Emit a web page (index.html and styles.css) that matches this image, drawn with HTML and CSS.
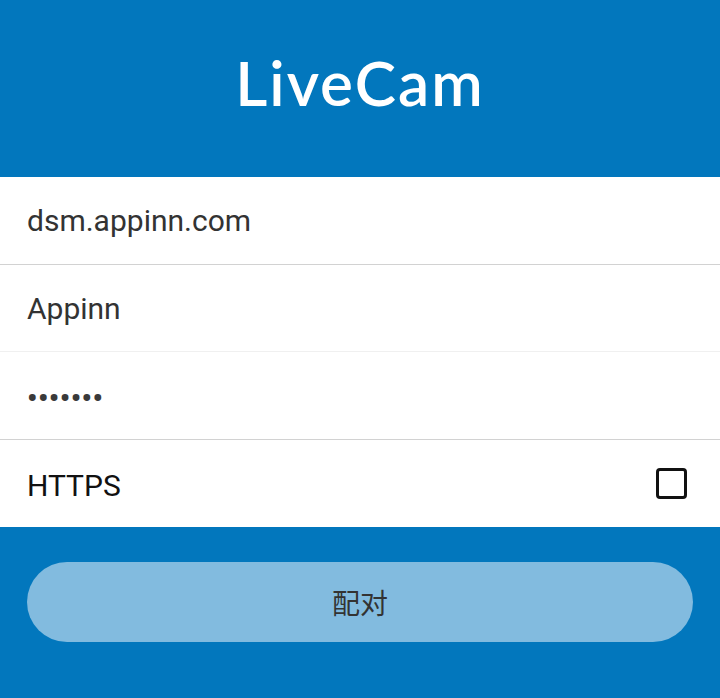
FILE: index.html
```html
<!DOCTYPE html>
<html lang="zh-CN">

<head>
    <meta charset="UTF-8">
    <meta name="viewport" content="width=device-width, initial-scale=1.0">
    <title>LiveCam</title>
    <link rel="stylesheet" href="styles.css">
</head>

<body>
    <div class="header">
        <h1 class="title">LiveCam</h1>
    </div>
    <div class="form">
        <div class="form-row line tall">
            <span class="field">dsm.appinn.com</span>
        </div>
        <div class="form-row faint">
            <span class="field">Appinn</span>
        </div>
        <div class="form-row line tall">
            <span class="field dots">•••••••</span>
        </div>
        <div class="form-row tall last">
            <span class="field label">HTTPS</span>
            <span class="checkbox"></span>
        </div>
    </div>
    <div class="footer">
        <button class="btn-pair">配对</button>
    </div>
</body>

</html>
```

FILE: styles.css
```css
html,
body {
    margin: 0;
    padding: 0;
    background: #0277bd;
}

body {
    width: 720px;
    height: 698px;
    overflow: hidden;
    font-family: Roboto, "Noto Sans CJK SC", sans-serif;
}

.header {
    height: 177px;
    display: flex;
    align-items: center;
    justify-content: center;
}

.title {
    margin: 0 0 14px;
    color: #fff;
    font-family: Lato, sans-serif;
    font-size: 62px;
    font-weight: 600;
    letter-spacing: 2px;
}

.form {
    background: #fff;
}

.form-row {
    height: 86px;
    display: flex;
    align-items: center;
    justify-content: space-between;
    padding: 0 33px 0 27px;
    border-bottom: 1px solid #fff;
}

.form-row.tall {
    height: 87px;
}

.form-row.last {
    border-bottom: 0;
}

.form-row.line {
    border-bottom-color: #d2d2d2;
}

.form-row.faint {
    border-bottom-color: #f0f0f0;
}

.field {
    font-size: 30px;
    color: #333;
}

.dots {
    font-size: 29px;
    font-weight: 700;
    letter-spacing: 0.5px;
    color: #3a3a3a;
    margin-top: 4px;
}

.label {
    color: #111;
    margin-top: 4px;
}

.checkbox {
    width: 25px;
    height: 25px;
    border: 3px solid #111;
    border-radius: 4px;
}

.footer {
    padding: 35px 27px;
}

.btn-pair {
    display: block;
    width: 100%;
    height: 80px;
    border: 0;
    border-radius: 40px;
    background: #82bbdf;
    color: #333;
    font-family: "Noto Sans CJK SC", sans-serif;
    font-size: 28px;
}
```
